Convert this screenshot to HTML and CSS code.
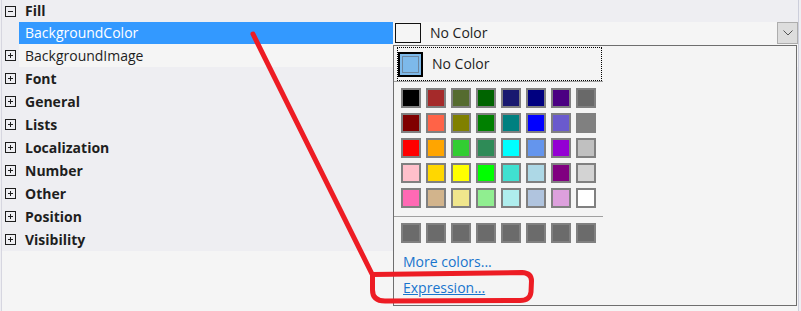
FILE: index.html
```html
<!DOCTYPE html>
<html>
<head>
<meta charset="utf-8">
<link rel="stylesheet" href="styles.css">
</head>
<body>
<div class="sheet">
  <div class="rows">
    <div class="row cat first">
      <span class="tg"><svg width="11" height="11" viewBox="0 0 11 11"><rect x="0.5" y="0.5" width="10" height="10" fill="none" stroke="#1e1e1e"/><path d="M3 5.5h5" stroke="#1e1e1e"/></svg></span>
      <span class="label">Fill</span>
    </div>
    <div class="row prop sel">
      <span class="gutter"></span>
      <span class="name">BackgroundColor</span>
      <div class="value">
        <span class="swatch-sm"></span>
        <span class="vtext">No Color</span>
        <span class="dd"><svg width="10" height="6" viewBox="0 0 10 6"><path d="M0.5 0.5l4.5 4.5 4.5-4.5" fill="none" stroke="#555" stroke-width="1"/></svg></span>
      </div>
    </div>
    <div class="row prop alt">
      <span class="gutter"><span class="tg"><svg width="11" height="11" viewBox="0 0 11 11"><rect x="0.5" y="0.5" width="10" height="10" fill="none" stroke="#1e1e1e"/><path d="M3 5.5h5M5.5 3v5" stroke="#1e1e1e"/></svg></span></span>
      <span class="name">BackgroundImage</span>
      <div class="value"></div>
    </div>
    <div class="row cat"><span class="tg"><svg width="11" height="11" viewBox="0 0 11 11"><rect x="0.5" y="0.5" width="10" height="10" fill="none" stroke="#1e1e1e"/><path d="M3 5.5h5M5.5 3v5" stroke="#1e1e1e"/></svg></span><span class="label">Font</span></div>
    <div class="row cat"><span class="tg"><svg width="11" height="11" viewBox="0 0 11 11"><rect x="0.5" y="0.5" width="10" height="10" fill="none" stroke="#1e1e1e"/><path d="M3 5.5h5M5.5 3v5" stroke="#1e1e1e"/></svg></span><span class="label">General</span></div>
    <div class="row cat"><span class="tg"><svg width="11" height="11" viewBox="0 0 11 11"><rect x="0.5" y="0.5" width="10" height="10" fill="none" stroke="#1e1e1e"/><path d="M3 5.5h5M5.5 3v5" stroke="#1e1e1e"/></svg></span><span class="label">Lists</span></div>
    <div class="row cat"><span class="tg"><svg width="11" height="11" viewBox="0 0 11 11"><rect x="0.5" y="0.5" width="10" height="10" fill="none" stroke="#1e1e1e"/><path d="M3 5.5h5M5.5 3v5" stroke="#1e1e1e"/></svg></span><span class="label">Localization</span></div>
    <div class="row cat"><span class="tg"><svg width="11" height="11" viewBox="0 0 11 11"><rect x="0.5" y="0.5" width="10" height="10" fill="none" stroke="#1e1e1e"/><path d="M3 5.5h5M5.5 3v5" stroke="#1e1e1e"/></svg></span><span class="label">Number</span></div>
    <div class="row cat"><span class="tg"><svg width="11" height="11" viewBox="0 0 11 11"><rect x="0.5" y="0.5" width="10" height="10" fill="none" stroke="#1e1e1e"/><path d="M3 5.5h5M5.5 3v5" stroke="#1e1e1e"/></svg></span><span class="label">Other</span></div>
    <div class="row cat"><span class="tg"><svg width="11" height="11" viewBox="0 0 11 11"><rect x="0.5" y="0.5" width="10" height="10" fill="none" stroke="#1e1e1e"/><path d="M3 5.5h5M5.5 3v5" stroke="#1e1e1e"/></svg></span><span class="label">Position</span></div>
    <div class="row cat"><span class="tg"><svg width="11" height="11" viewBox="0 0 11 11"><rect x="0.5" y="0.5" width="10" height="10" fill="none" stroke="#1e1e1e"/><path d="M3 5.5h5M5.5 3v5" stroke="#1e1e1e"/></svg></span><span class="label">Visibility</span></div>
  </div>
  <div class="desc"></div>
</div>

<div class="popup">
  <div class="pcol">
    <div class="nocolor">
      <span class="swatch-lg"></span>
      <span class="nctext">No Color</span>
    </div>
    <div class="sep"></div>
    <div class="palette">
      <span class="c" style="background:#000000"></span>
      <span class="c" style="background:#A52A2A"></span>
      <span class="c" style="background:#556B2F"></span>
      <span class="c" style="background:#006400"></span>
      <span class="c" style="background:#191970"></span>
      <span class="c" style="background:#000080"></span>
      <span class="c" style="background:#4B0082"></span>
      <span class="c" style="background:#696969"></span>
      <span class="c" style="background:#800000"></span>
      <span class="c" style="background:#FF6347"></span>
      <span class="c" style="background:#808000"></span>
      <span class="c" style="background:#008000"></span>
      <span class="c" style="background:#008080"></span>
      <span class="c" style="background:#0000FF"></span>
      <span class="c" style="background:#6A5ACD"></span>
      <span class="c" style="background:#808080"></span>
      <span class="c" style="background:#FF0000"></span>
      <span class="c" style="background:#FFA500"></span>
      <span class="c" style="background:#32CD32"></span>
      <span class="c" style="background:#2E8B57"></span>
      <span class="c" style="background:#00FFFF"></span>
      <span class="c" style="background:#6495ED"></span>
      <span class="c" style="background:#9400D3"></span>
      <span class="c" style="background:#C0C0C0"></span>
      <span class="c" style="background:#FFC0CB"></span>
      <span class="c" style="background:#FFD700"></span>
      <span class="c" style="background:#FFFF00"></span>
      <span class="c" style="background:#00FF00"></span>
      <span class="c" style="background:#40E0D0"></span>
      <span class="c" style="background:#ADD8E6"></span>
      <span class="c" style="background:#800080"></span>
      <span class="c" style="background:#D3D3D3"></span>
      <span class="c" style="background:#FF69B4"></span>
      <span class="c" style="background:#D2B48C"></span>
      <span class="c" style="background:#F0E68C"></span>
      <span class="c" style="background:#90EE90"></span>
      <span class="c" style="background:#AFEEEE"></span>
      <span class="c" style="background:#B0C4DE"></span>
      <span class="c" style="background:#DDA0DD"></span>
      <span class="c" style="background:#FFFFFF"></span>
    </div>
    <div class="sep sep2"></div>
    <div class="palette recent">
      <span class="c g"></span><span class="c g"></span><span class="c g"></span><span class="c g"></span>
      <span class="c g"></span><span class="c g"></span><span class="c g"></span><span class="c g"></span>
    </div>
    <a class="link more">More colors...</a>
    <a class="link expr">Expression...</a>
  </div>
</div>

<svg class="annot" width="801" height="311" viewBox="0 0 801 311">
  <path d="M253 34 L372 274" fill="none" stroke="#ED1C24" stroke-width="5" stroke-linecap="round"/>
  <path d="M372.5 274.5 L522 272.5 Q531.5 273 531.5 281 L531 292 Q530 300.5 520 300.5 L385 301 Q372.5 301 372.5 290 Z" fill="none" stroke="#ED1C24" stroke-width="5" stroke-linejoin="round"/>
</svg>
</body>
</html>
```

FILE: styles.css
```css
html, body {
  margin: 0;
  padding: 0;
}
body {
  width: 801px;
  height: 311px;
  overflow: hidden;
  position: relative;
  background: #EEEEF2;
  font-family: "Open Sans", "Noto Sans", sans-serif;
  font-size: 14px;
  color: #1E1E1E;
}
.sheet {
  margin-left: 1px;
  width: 796px;
  height: 311px;
  border-left: 1px solid #D6D6E0;
  border-right: 1px solid #CCCEDB;
  display: flex;
  flex-direction: column;
}
.rows {
  display: flex;
  flex-direction: column;
}
.row {
  height: 23px;
  display: flex;
  align-items: center;
}
.row.first { height: 22px; }
.row.sel { height: 22px; }
.tg {
  width: 11px;
  height: 11px;
  display: block;
  margin-left: 3px;
}
.tg svg { display: block; }
.cat .label {
  font-weight: 700;
  margin-left: 9px;
}
.first .label { padding-bottom: 1px; }
.prop {
  display: grid;
  grid-template-columns: 17px 374px 1fr;
  align-items: stretch;
}
.gutter {
  display: flex;
  align-items: center;
}
.name {
  display: flex;
  align-items: center;
  padding-left: 6px;
  padding-bottom: 1px;
}
.sel .name {
  background: #3399FF;
  color: #FFFFFF;
}
.alt .name, .alt .value {
  background: #F5F5F5;
}
.value {
  background: #F5F5F5;
  display: flex;
  align-items: center;
}
.swatch-sm {
  width: 24px;
  height: 18px;
  border: 1px solid #111;
  background: #F5F5F5;
  margin-left: 2px;
}
.vtext {
  margin-left: 9px;
  padding-bottom: 1px;
  flex: 1;
}
.dd {
  width: 19px;
  height: 20px;
  border: 1px solid #ADADAD;
  background: #DDDDDD;
  display: flex;
  align-items: center;
  justify-content: center;
}
.dd svg { display: block; }
.desc {
  flex: 1;
  background: #F5F5F5;
}

.popup {
  position: absolute;
  left: 393px;
  top: 45px;
  width: 404px;
  height: 261px;
  box-sizing: border-box;
  border: 1px solid #6E6E6E;
  background: #F4F4F4;
}
.pcol {
  width: 209px;
  display: flex;
  flex-direction: column;
}
.nocolor {
  margin: 1px 0 0 3px;
  width: 205px;
  height: 34px;
  box-sizing: border-box;
  border: 1px dotted #000;
  display: flex;
  align-items: center;
}
.swatch-lg {
  width: 25px;
  height: 25px;
  box-sizing: border-box;
  border: 2px solid #000;
  background: #7DB9EA;
  box-shadow: inset 0 0 0 2px #7DB9EA, inset 0 0 0 3px #6D87A0;
}
.nctext {
  margin-left: 9px;
  padding-bottom: 1px;
}
.sep {
  height: 1px;
  background: #A0A0A0;
}
.sep2 { margin-top: 8px; }
.palette {
  display: grid;
  grid-template-columns: repeat(8, 20px);
  gap: 5px;
  padding-left: 7px;
  margin-top: 6px;
}
.c {
  width: 20px;
  height: 20px;
  box-sizing: border-box;
  border: 2px solid #808080;
}
.c.g { background: #6B6B6B; }
.recent { margin-top: 6px; }
.link {
  color: #1874CD;
  margin-left: 9px;
  line-height: 26px;
}
.more { margin-top: 6px; }
.expr { text-decoration: underline; }
.annot {
  position: absolute;
  left: 0;
  top: 0;
  pointer-events: none;
}
```
